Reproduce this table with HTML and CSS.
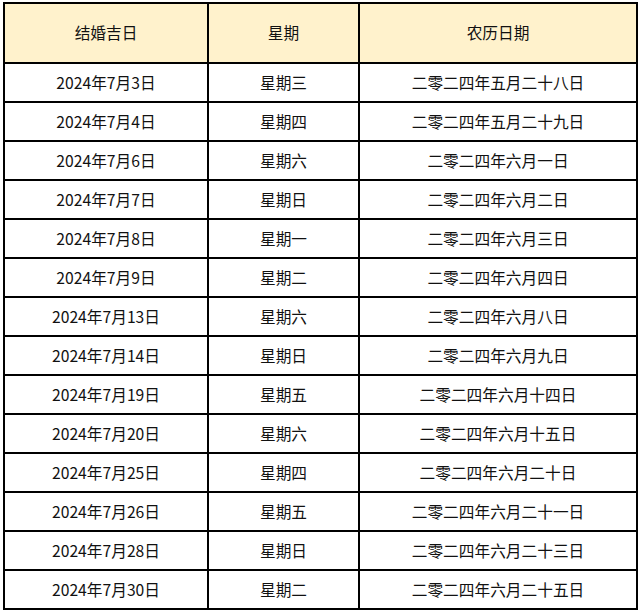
FILE: index.html
```html
<!DOCTYPE html>
<html lang="zh">
<head>
<meta charset="utf-8">
<title>结婚吉日</title>
<link rel="stylesheet" href="styles.css">
</head>
<body>
<div class="wrap">
<table class="dates">
<colgroup>
<col class="c1"><col class="c2"><col class="c3">
</colgroup>
<thead>
<tr class="head"><th>结婚吉日</th><th>星期</th><th>农历日期</th></tr>
</thead>
<tbody>
<tr><td>2024年7月3日</td><td>星期三</td><td>二零二四年五月二十八日</td></tr>
<tr><td>2024年7月4日</td><td>星期四</td><td>二零二四年五月二十九日</td></tr>
<tr><td>2024年7月6日</td><td>星期六</td><td>二零二四年六月一日</td></tr>
<tr><td>2024年7月7日</td><td>星期日</td><td>二零二四年六月二日</td></tr>
<tr><td>2024年7月8日</td><td>星期一</td><td>二零二四年六月三日</td></tr>
<tr><td>2024年7月9日</td><td>星期二</td><td>二零二四年六月四日</td></tr>
<tr><td>2024年7月13日</td><td>星期六</td><td>二零二四年六月八日</td></tr>
<tr><td>2024年7月14日</td><td>星期日</td><td>二零二四年六月九日</td></tr>
<tr><td>2024年7月19日</td><td>星期五</td><td>二零二四年六月十四日</td></tr>
<tr><td>2024年7月20日</td><td>星期六</td><td>二零二四年六月十五日</td></tr>
<tr><td>2024年7月25日</td><td>星期四</td><td>二零二四年六月二十日</td></tr>
<tr><td>2024年7月26日</td><td>星期五</td><td>二零二四年六月二十一日</td></tr>
<tr><td>2024年7月28日</td><td>星期日</td><td>二零二四年六月二十三日</td></tr>
<tr><td>2024年7月30日</td><td>星期二</td><td>二零二四年六月二十五日</td></tr>
</tbody>
</table>
</div>
</body>
</html>
```

FILE: styles.css
```css
html, body {
  margin: 0;
  padding: 0;
  background: #ffffff;
}
body {
  font-family: "Noto Sans CJK SC", "Noto Sans", sans-serif;
  font-size: 15.7px;
  color: #111111;
}
.wrap {
  padding: 2px 0 0 3px;
}
.dates {
  border-collapse: collapse;
  table-layout: fixed;
  width: 633px;
}
.c1 { width: 204px; }
.c2 { width: 151px; }
.c3 { width: 278px; }
.dates th,
.dates td {
  border: 2px solid #000000;
  text-align: center;
  vertical-align: middle;
  padding: 0;
  font-weight: normal;
  line-height: 20px;
}
.head th {
  background: #fff2cc;
  height: 58px;
}
.dates tbody td {
  height: 37px;
}
```
